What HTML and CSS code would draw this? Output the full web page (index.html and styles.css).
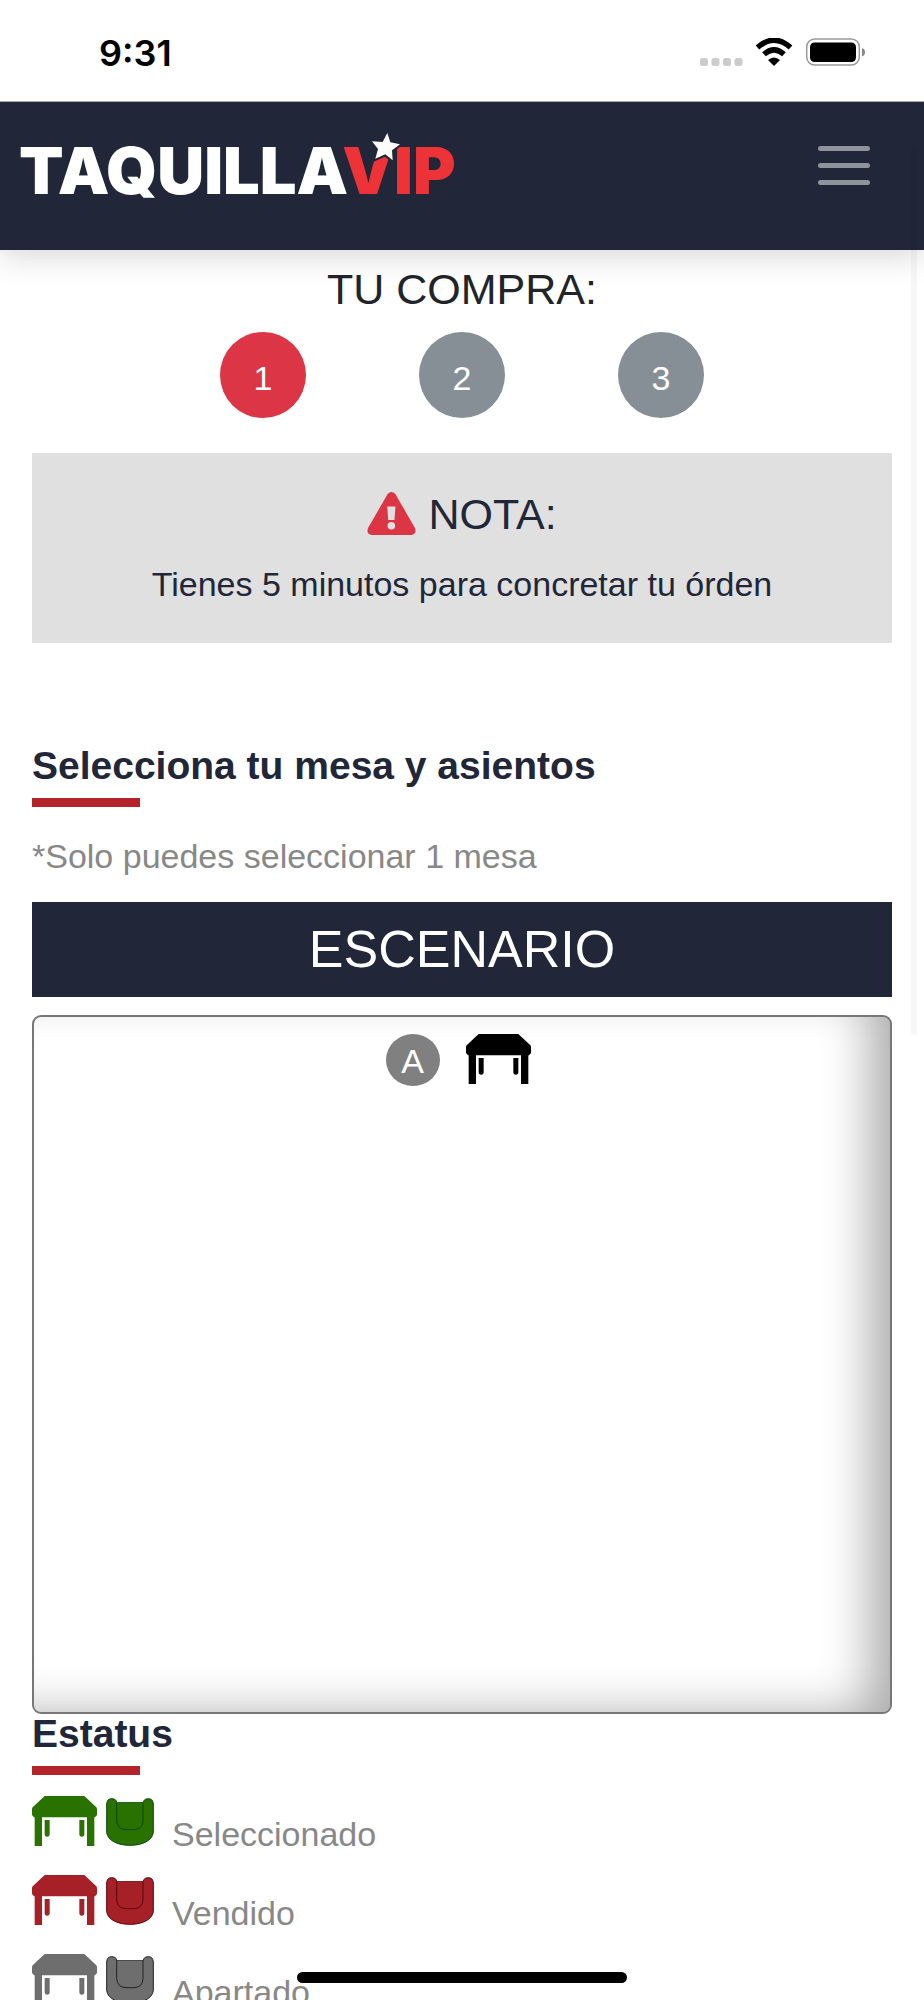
FILE: index.html
```
<!DOCTYPE html>
<html lang="es">
<head>
<meta charset="utf-8">
<meta name="viewport" content="width=device-width, initial-scale=1">
<title>Taquilla VIP</title>
<link rel="stylesheet" href="styles.css">
</head>
<body>
<svg class="sprite" aria-hidden="true">
  <symbol id="table" viewBox="0 0 195 150">
    <path d="M38 0H157L193 34Q195 36 195 40V57L189 64H6L0 57V40Q0 36 2 34Z"/>
    <path d="M8 60H30V150H8ZM165 60H187V150H165Z"/>
    <path d="M38 72H53V114Q53 122 45.500 122Q38 122 38 114ZM142 72H157V114Q157 122 149.500 122Q142 122 142 114Z"/>
  </symbol>
  <symbol id="chair" viewBox="0 0 144 144">
    <path class="chair-line" d="M2 18Q3 2 17 2Q31 2 32 14H112Q113 2 127 2Q141 2 142 18V104C138 130 105 142 72 142C39 142 6 130 2 104Z"/>
    <path class="chair-line" d="M32 14V68Q34 94 60 95H84Q110 94 111 68V14"/>
  </symbol>
</svg>
<div class="screen">
  <div class="status">
    <span class="clock">9:31</span>
    <svg class="status-icons" viewBox="0 0 165 28" aria-hidden="true">
      <g fill="#ccc"><rect x="0" y="20" width="8" height="8" rx="2.500"/><rect x="11.500" y="20" width="8" height="8" rx="2.500"/><rect x="23" y="20" width="8" height="8" rx="2.500"/><rect x="34.500" y="20" width="8" height="8" rx="2.500"/></g>
      <path d="M57.500 9.500Q74 -5 90.500 9.500M64 16.300Q74 7.500 84 16.300" fill="none" stroke="#000" stroke-width="5.500"/>
      <path d="M68 22Q74 17 80 22L74 28Z"/>
      <rect x="106.700" y="1" width="52.600" height="26" rx="8" fill="none" stroke="#999" stroke-width="1.500"/>
      <rect x="110" y="4.500" width="46" height="19.500" rx="4.500"/>
      <path d="M162 10Q165 11 165 14.300Q165 17.500 162 18.500Z" fill="#888"/>
    </svg>
  </div>
  <header class="navbar">
    <a class="brand" href="#" aria-label="Taquilla VIP"><span>TAQUILLA</span><span class="vip">VIP</span><svg class="star" viewBox="0 0 84 84" aria-hidden="true"><path d="M46 0L55 28L84 34L60 52L62 82L40 64L10 77L18 48L0 25L32 27Z"/></svg></a>
    <button class="menu" type="button" aria-label="Menú"><i></i><i></i><i></i></button>
  </header>
  <main class="content">
    <h1 class="title">TU COMPRA:</h1>
    <ol class="steps"><li class="step current">1</li><li class="step">2</li><li class="step">3</li></ol>
    <section class="note">
      <h2 class="title note-title"><svg class="warn" viewBox="0 0 146 130" aria-hidden="true"><path d="M61 7Q73 -7 85 7L144 109Q150 126 134 130H12Q-4 126 2 109Z" fill="#dc3545"/><path d="M60 44H85L82 85H63Z" fill="#e0e0e0"/><circle cx="72.500" cy="102" r="11.500" fill="#e0e0e0"/></svg>NOTA:</h2>
      <p class="text">Tienes 5 minutos para concretar tu órden</p>
    </section>
    <h2 class="heading first">Selecciona tu mesa y asientos</h2>
    <p class="text hint">*Solo puedes seleccionar 1 mesa</p>
    <div class="stage">ESCENARIO</div>
    <div class="map">
      <span class="row-label">A</span>
      <button class="seat" type="button" aria-label="Mesa A"><svg class="table-icon"><use href="#table"/></svg></button>
    </div>
    <h2 class="heading">Estatus</h2>
    <ul class="legend">
      <li class="text selected"><svg class="table-icon"><use href="#table"/></svg><svg class="chair-icon"><use href="#chair"/></svg><span>Seleccionado</span></li>
      <li class="text sold"><svg class="table-icon"><use href="#table"/></svg><svg class="chair-icon"><use href="#chair"/></svg><span>Vendido</span></li>
      <li class="text held"><svg class="table-icon"><use href="#table"/></svg><svg class="chair-icon"><use href="#chair"/></svg><span>Apartado</span></li>
    </ul>
  </main>
  <div class="scrollbar"></div>
  <div class="home"></div>
</div>
</body>
</html>
```
FILE: styles.css
```
* { box-sizing: border-box; }
body { margin: 0; background: #fff; color: #212529; font-family: "Liberation Sans", Arial, sans-serif; }
h1, h2, p, ol, ul { margin: 0; padding: 0; list-style: none; }
button { border: 0; padding: 0; background: none; cursor: pointer; }
.sprite { position: absolute; width: 0; height: 0; }
.screen { position: relative; height: 100vh; overflow: hidden; }

.status { position: relative; z-index: 1; height: 102px; padding: 0 59px 0 99px; display: flex; align-items: center; justify-content: space-between; background: #fff; border-bottom: 1px solid #aaa; }
.clock { font: 600 36px/40px Inter, sans-serif; color: #000; padding-top: 4px; }
.status-icons { width: 165px; height: 28px; margin-top: 3px; }

.navbar { position: relative; height: 148px; padding: 0 54px 22px 19px; display: flex; align-items: center; justify-content: space-between; background: #222639; box-shadow: 0 4px 32px rgba(0, 0, 0, .18); }
.brand { position: relative; display: flex; padding-top: 12px; font: 900 65px/78px Inter, sans-serif; color: #fff; text-decoration: none; }
.vip { margin-left: -6px; color: #ee3338; }
.star { position: absolute; top: 13px; right: 56px; width: 28px; height: 28px; fill: #fff; stroke: #222639; stroke-width: 12px; paint-order: stroke; overflow: visible; }
.menu { width: 52px; display: grid; gap: 12px; }
.menu i { height: 5px; border-radius: 3px; background: #90929c; }

.content { padding: 13px 32px 0; }
.title { font-size: 43px; line-height: 52px; font-weight: 400; text-align: center; }
.steps { display: flex; justify-content: center; gap: 113px; margin: 17px 0 35px; }
.step { width: 86px; height: 86px; border-radius: 50%; padding-top: 6px; display: grid; place-items: center; background: #868e96; color: #fff; font-size: 34px; }
.step.current { background: #dc3545; }
.note { padding: 35px 20px 33px; background: #e0e0e0; color: #222639; text-align: center; }
.note-title { display: flex; justify-content: center; align-items: center; gap: 12px; margin-bottom: 18px; }
.warn { width: 49px; height: 43px; margin-bottom: 2px; }
.text { font-size: 34px; line-height: 52px; }
.heading { font-size: 39px; line-height: 40px; font-weight: 700; color: #222639; }
.heading::after { content: ""; display: block; width: 108px; height: 9px; margin-top: 12px; background: #b5242a; }
.heading.first { margin-top: 103px; }
.hint { margin: 23px 0 20px; color: #888; }
.stage { padding: 16px 0 17px; background: #222639; color: #fff; font-size: 52px; line-height: 62px; text-align: center; }
.map { height: 699px; margin-top: 18px; padding: 17px 8px 0 0; display: flex; justify-content: center; align-items: flex-start; gap: 26px; border: 2px solid #777; border-radius: 9px; box-shadow: inset -34px -12px 48px -14px rgba(0, 0, 0, .33); }
.row-label { width: 54px; height: 52px; border-radius: 50%; background: #808080; color: #fff; font-size: 34px; line-height: 54px; text-align: center; }
.table-icon { width: 65px; height: 50px; display: block; }
.chair-icon { width: 48px; height: 48px; margin: 0 18px 0 9px; }
.chair-line { stroke-width: 3px; stroke: var(--line); }
.legend { margin-top: 21px; display: grid; gap: 15px; }
.legend li { display: flex; align-items: baseline; }
.legend span { color: #888; }
.selected { fill: #297200; --line: #0b4a0a; }
.sold { fill: #a52027; --line: #5c060b; }
.held { fill: #6e6e6e; --line: #222; }

.scrollbar { position: absolute; top: 146px; right: 7px; width: 6px; height: 889px; border-radius: 3px; background: rgba(0, 0, 0, .03); }
.home { position: absolute; bottom: 17px; left: 50%; width: 330px; height: 11px; margin-left: -165px; border-radius: 6px; background: #000; }
```
